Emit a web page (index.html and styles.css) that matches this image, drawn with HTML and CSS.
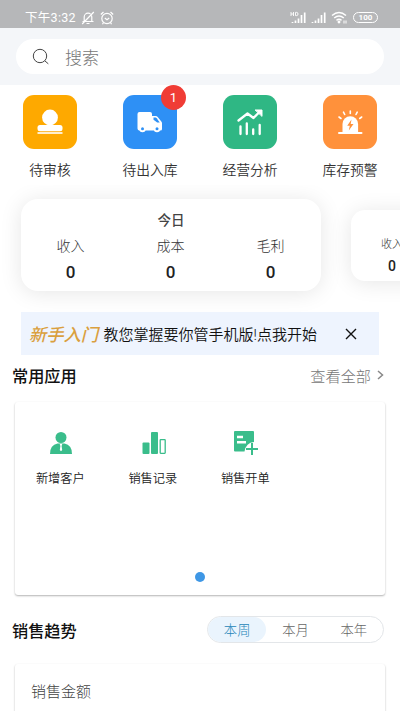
FILE: index.html
```html
<!DOCTYPE html>
<html lang="zh-CN">
<head>
<meta charset="utf-8">
<title>首页</title>
<link rel="stylesheet" href="styles.css">
</head>
<body>
<header class="status">
  <div class="status-left">
    <span class="clock">下午3:32</span>
    <svg width="14" height="14" viewBox="0 0 14 14" fill="none" stroke="#fff" stroke-width="1.200"><path d="M1.500 10.500h11M3.200 10.500V6a3.800 3.800 0 0 1 7.600 0v4.500M5.500 12.500h3M12.800 1L1.200 13"/></svg>
    <svg class="alarm" width="14" height="14" viewBox="0 0 14 14" fill="none" stroke="#fff" stroke-width="1.200"><circle cx="7" cy="7.500" r="5.200"/><path d="M4.800 7L7 8.700 9.200 7M.8 3.500L3.500 1M13.200 3.500L10.500 1M3.500 11.500L2.500 13.200M10.500 11.500l1 1.700"/></svg>
  </div>
  <div class="status-right">
    <svg width="17" height="13" viewBox="0 0 17 13" stroke="#fff" fill="none"><path stroke-width="1.700" d="M2.500 12v-1M5.500 12V9.500M8.500 12V7.500M11.500 12V4M14.700 12V1.500"/><path stroke-width=".9" d="M1 1v4M3.500 1v4M1 3h2.500M5.500 1.400v3.200h1.200q1.300 0 1.300-1.600t-1.300-1.600z"/></svg>
    <svg class="signal" width="16" height="13" viewBox="0 0 16 13" stroke="#fff" stroke-width="1.700"><path d="M1.500 12v-1M4.500 12V9.500M7.500 12V7.500M10.500 12V4M13.700 12V1.500"/></svg>
    <svg class="wifi" width="17" height="13" viewBox="0 0 17 13" fill="none" stroke="#fff" stroke-width="1.500"><path d="M1 4.500q7-6 14 0M3.200 7q4.800-4 9.600 0M5.500 9.300q2.500-2 5 0"/><circle cx="8" cy="11" r=".7" fill="#fff"/><path stroke-width="1" d="M13 9.500v3M15 9.500v3"/></svg>
    <span class="battery">100</span>
  </div>
</header>
<div class="search-bar">
  <div class="search">
    <svg width="18" height="18" viewBox="0 0 18 18" fill="none" stroke="#444" stroke-width="1"><circle cx="8" cy="8" r="6.700"/><path d="M12.800 12.800l3.500 3"/></svg>
    <span>搜索</span>
  </div>
</div>
<nav class="shortcuts">
  <a class="shortcut"><span class="tile amber"><svg width="54" height="54" viewBox="0 0 54 54" fill="#fff"><circle cx="27" cy="22.500" r="7.900"/><rect x="14.500" y="30" width="25" height="6.200" rx="2.500"/><rect x="14.500" y="37.200" width="25" height="1.600"/></svg></span><span>待审核</span></a>
  <a class="shortcut"><span class="tile blue"><svg width="54" height="54" viewBox="0 0 54 54"><path fill="#fff" d="M16.500 17H27q2 0 2 2v2h3.500q1.500 0 2.400 1.200l3.600 4.500q.5.700.5 1.500V34q0 1.500-1.500 1.500H16.500q-2 0-2-2V19q0-2 2-2z"/><path fill="#2e90f5" d="M30.500 22.500h2q.7 0 1.200.7l3 4.300h-2.500l-3.700-2.700z"/><g fill="#fff"><circle cx="19.500" cy="34" r="3.200"/><circle cx="34" cy="34" r="3.200"/></g><g fill="#2e90f5"><circle cx="19.500" cy="33.800" r="1.500"/><circle cx="34" cy="33.800" r="1.500"/></g></svg><b class="badge">1</b></span><span>待出入库</span></a>
  <a class="shortcut"><span class="tile green"><svg width="54" height="54" viewBox="0 0 54 54" fill="none" stroke="#fff" stroke-width="2.300" stroke-linecap="round" stroke-linejoin="round"><path d="M15.500 25.500l9-7 6 4.500 6-6M17.500 31.500V39M23.800 28.500V39M30.200 34.500V39M36.700 30V39"/><path fill="#fff" stroke-width="1" d="M32.500 15h6.500v6z"/></svg></span><span>经营分析</span></a>
  <a class="shortcut"><span class="tile orange"><svg width="54" height="54" viewBox="0 0 54 54" fill="none" stroke="#fff" stroke-width="1.600" stroke-linecap="round"><path fill="#fff" stroke="none" d="M19.500 37v-8a7.800 7.800 0 0 1 15.600 0v8z"/><path stroke-width="2" d="M16 38h22.500"/><path d="M27.300 18.500V16M21.700 19.500l-1.200-2.300M33 19.500l1.200-2.300M18 23.500l-2-1.500M36.700 23.500l2-1.500"/><path fill="#ff913b" stroke="none" d="M28.500 24.500l-4.300 6.300h2.600l-1 4.700 4.700-6.500h-2.800z"/></svg></span><span>库存预警</span></a>
</nav>
<section class="summary">
  <article class="stat-card">
    <h2>今日</h2>
    <dl>
      <div><dt>收入</dt><dd>0</dd></div>
      <div><dt>成本</dt><dd>0</dd></div>
      <div><dt>毛利</dt><dd>0</dd></div>
    </dl>
  </article>
  <article class="stat-card next">
    <dl>
      <div><dt>收入</dt><dd>0</dd></div>
    </dl>
  </article>
</section>
<aside class="guide">
  <strong>新手入门</strong><span>教您掌握要你管手机版!点我开始</span>
  <svg width="12" height="12" viewBox="0 0 12 12" stroke="#111" stroke-width="1.400"><path d="M1 1l10 10M11 1L1 11"/></svg>
</aside>
<section class="heading">
  <h3>常用应用</h3>
  <a class="more">查看全部<svg width="7" height="10" viewBox="0 0 7 10" fill="none" stroke="#888" stroke-width="1.500"><path d="M1 1l4.500 4L1 9"/></svg></a>
</section>
<section class="panel apps">
  <div class="app-grid">
    <a class="app"><svg width="26" height="26" viewBox="0 0 26 26" fill="#3abd8b"><circle cx="13" cy="7.500" r="5.500"/><path d="M2 24q0-9 7.500-10.500h7Q24 15 24 24z"/><path fill="#fff" d="M11.700 14h2.600l-.7 2 .6 4-1.200 1.200-1.200-1.200.6-4z"/></svg><span>新增客户</span></a>
    <a class="app"><svg width="26" height="26" viewBox="0 0 26 26" fill="#3abd8b"><rect x="1.500" y="12.500" width="7" height="11.500" rx="1"/><rect x="10" y="2" width="7" height="22" rx="1"/><rect x="19.200" y="9.700" width="5" height="13.600" rx=".5" fill="none" stroke="#3abd8b" stroke-width="1.300"/></svg><span>销售记录</span></a>
    <a class="app"><svg width="26" height="26" viewBox="0 0 26 26"><path fill="#3abd8b" d="M2 1h18q1 0 1 1v10q-8 .5-9.500 9.500H2q-1 0-1-1V2q0-1 1-1z"/><path stroke="#fff" stroke-width="2.500" d="M4 7h6M4 12.200h9"/><path stroke="#3abd8b" stroke-width="2" d="M19 13V25M13 19H25"/></svg><span>销售开单</span></a>
  </div>
  <i class="dot"></i>
</section>
<section class="heading trend-heading">
  <h3>销售趋势</h3>
  <div class="tabs"><span class="active">本周</span><span>本月</span><span>本年</span></div>
</section>
<section class="panel trend">销售金额</section>
</body>
</html>
```
FILE: styles.css
```css
* { box-sizing: border-box; }
body {
  margin: 0;
  height: 711px;
  overflow: hidden;
  background: #fff;
  color: #444;
  font-family: Roboto, "Noto Sans CJK SC", sans-serif;
}
h2, h3, dl, dd { margin: 0; }
svg { display: block; flex: none; }
.status {
  height: 28px;
  padding: 7px 22px 0 25px;
  display: flex;
  justify-content: space-between;
  background: #b6b7b9;
  color: #fff;
}
.status-left, .status-right { display: flex; align-items: center; height: 21px; }
.clock { width: 56px; font-size: 12.500px; line-height: 20px; letter-spacing: .3px; white-space: nowrap; }
.alarm { margin-left: 5px; }
.signal { margin-left: 4px; }
.wifi { margin-left: 4px; }
.battery {
  width: 25px;
  height: 11px;
  margin-left: 5px;
  border: 1px solid #fff;
  border-radius: 6px;
  font-size: 8px;
  font-weight: 700;
  line-height: 9px;
  text-align: center;
}
.search-bar { height: 57px; padding: 11px 16px; background: #f4f6f9; }
.search {
  height: 35px;
  padding-left: 16px;
  display: flex;
  align-items: center;
  gap: 15px;
  border-radius: 18px;
  background: #fff;
  color: #777;
  font-size: 17px;
  font-weight: 300;
}
.shortcuts { height: 100px; padding-top: 10px; display: grid; grid-template-columns: repeat(4, 100px); }
.shortcut { display: flex; flex-direction: column; align-items: center; gap: 10px; color: #333; font-size: 13.800px; line-height: 22px; font-weight: 350; }
.tile { position: relative; width: 54px; height: 54px; border-radius: 11px; }
.amber { background: #fea900; }
.blue { background: #2e90f5; }
.green { background: #2fb784; }
.orange { background: #ff913b; }
.badge {
  position: absolute;
  top: -10px;
  right: -9px;
  width: 25px;
  height: 25px;
  border-radius: 50%;
  background: #f03c35;
  color: #fff;
  font-size: 13px;
  font-weight: 400;
  line-height: 25px;
  text-align: center;
}
.summary {
  height: 127px;
  padding: 14px 0 0 21px;
  display: flex;
  gap: 30px;
  align-items: flex-start;
  overflow: hidden;
}
.stat-card {
  flex: none;
  width: 300px;
  height: 92px;
  padding-top: 10px;
  border-radius: 17px;
  background: #fff;
  box-shadow: 0 2px 22px rgba(0, 0, 0, .1);
  text-align: center;
}
.stat-card h2 { font-size: 13.500px; line-height: 23px; font-weight: 500; }
.stat-card dl { display: grid; grid-template-columns: repeat(3, 100px); }
.stat-card dl div { width: 99px; }
.stat-card dt { font-size: 14px; line-height: 29px; font-weight: 300; color: #333; }
.stat-card dd { color: #222; font-size: 17px; line-height: 22px; font-weight: 500; }
.next { width: 240px; height: 71px; margin-top: 11px; padding-top: 24px; border-radius: 14px; }
.next dl { grid-template-columns: repeat(3, 80px); }
.next dl div { width: 82px; }
.next dt { font-size: 11px; line-height: 22px; }
.next dd { font-size: 14px; line-height: 20px; }
.guide {
  height: 43px;
  margin: 0 21px;
  padding: 0 22px 0 8px;
  display: flex;
  align-items: center;
  background: #eef4fe;
  color: #111;
  font-size: 15px;
  font-weight: 350;
}
.guide strong { width: 74.500px; color: #daa03e; font-size: 17.300px; font-weight: 500; font-style: italic; white-space: nowrap; }
.guide svg { margin-left: auto; }
.heading { height: 47px; padding: 0 16px 7px 12px; display: flex; align-items: center; justify-content: space-between; }
.heading h3 { color: #111; font-size: 16.200px; font-weight: 500; }
.more { display: flex; align-items: center; gap: 6px; color: #777; font-size: 15.200px; font-weight: 300; }
.panel { margin: 0 15px; border-radius: 3px; background: #fff; box-shadow: 0 1px 2px rgba(0, 0, 0, .3); }
.apps { height: 193px; padding-top: 28px; }
.app-grid { display: grid; grid-template-columns: repeat(4, 92.500px); height: 140px; align-items: start; }
.app { display: flex; flex-direction: column; align-items: center; gap: 13px; color: #222; font-size: 12.200px; line-height: 20px; font-weight: 350; }
.app span { margin-right: 2px; }
.dot { display: block; width: 10px; height: 10px; margin: 2px auto 0; border-radius: 50%; background: #3e97e5; }
.trend-heading { height: 69px; padding-bottom: 0; }
.tabs {
  width: 177px;
  height: 27px;
  display: flex;
  border: 1px solid #e3e6e9;
  border-radius: 14px;
  overflow: hidden;
  color: #666;
  font-size: 13.300px;
  font-weight: 300;
  line-height: 27px;
  text-align: center;
}
.tabs span { flex: 1; }
.tabs .active { border-radius: 13px; background: #eaf4fd; color: #2585b8; }
.trend { height: 80px; padding: 17px 16px; color: #444; font-size: 15px; line-height: 23px; font-weight: 300; }
```
